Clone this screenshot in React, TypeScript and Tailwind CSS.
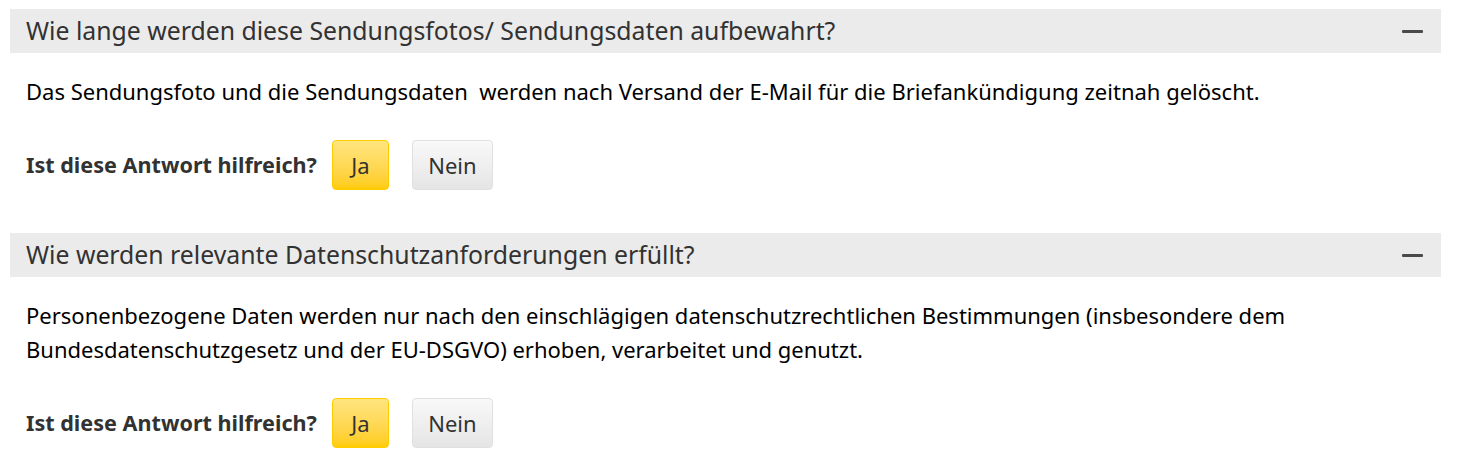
const faqs = [
  {
    question: "Wie lange werden diese Sendungsfotos/ Sendungsdaten aufbewahrt?",
    answer:
      "Das Sendungsfoto und die Sendungsdaten\u00a0 werden nach Versand der E-Mail für die Briefankündigung zeitnah gelöscht.",
  },
  {
    question: "Wie werden relevante Datenschutzanforderungen erfüllt?",
    answer:
      "Personenbezogene Daten werden nur nach den einschlägigen datenschutzrechtlichen Bestimmungen (insbesondere dem Bundesdatenschutzgesetz und der EU-DSGVO) erhoben, verarbeitet und genutzt.",
  },
];

function FaqItem({ question, answer }: { question: string; answer: string }) {
  return (
    <div className="mb-[43px]">
      <div className="h-[44px] bg-[#ebebeb] flex items-center justify-between pl-4 pr-[18px]">
        <div className="text-[24.8px] text-[#323232]">{question}</div>
        <div className="w-[21px] h-[3px] bg-[#4a4a4a] rounded-[1px]" />
      </div>

      <div className="px-4 pt-[21px] text-[22px] leading-[34px] text-black">
        {answer}
      </div>

      <div className="px-4 mt-[32px] flex items-center">
        <div className="font-bold text-[21.6px] text-[#323232]">Ist diese Antwort hilfreich?</div>
        <button className="ml-[15px] w-[57px] h-[50px] rounded-[4px] border border-[#ffcc00] bg-gradient-to-b from-[#ffe57f] to-[#ffcc00] text-[22px] text-[#323232]">
          Ja
        </button>
        <button className="ml-[23px] w-[81px] h-[50px] rounded-[4px] border border-[#e0e0e0] bg-gradient-to-b from-[#f9f9f9] to-[#e5e5e5] text-[22px] text-[#323232]">
          Nein
        </button>
      </div>
    </div>
  );
}

export default function App() {
  return (
    <div
      className="w-[1469px] h-[472px] bg-white pl-[10px] pr-[28px] pt-[9px] overflow-hidden"
      style={{ fontFamily: '"Noto Sans", sans-serif' }}
    >
      {faqs.map((f) => (
        <FaqItem key={f.question} question={f.question} answer={f.answer} />
      ))}
    </div>
  );
}
